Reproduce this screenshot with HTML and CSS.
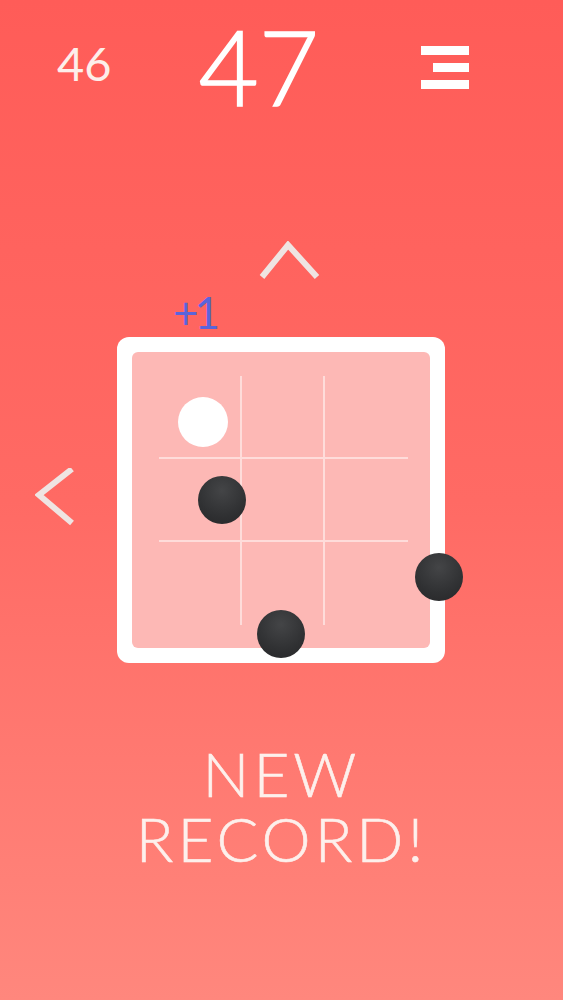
FILE: index.html
```html
<!DOCTYPE html>
<html lang="en">
<head>
    <meta charset="UTF-8">
    <meta name="viewport" content="width=device-width, initial-scale=1.0">
    <title>Grid Dodge</title>
    <link rel="stylesheet" href="styles.css">
</head>
<body>
    <div class="pantalla">
        <header class="marcador">
            <div class="mejor">46</div>
            <div class="puntos">47</div>
            <div class="menu">
                <span></span>
                <span class="corta"></span>
                <span></span>
            </div>
        </header>

        <div class="flecha-arriba">
            <svg width="64" height="40" viewBox="0 0 64 40">
                <polyline points="5,36 31,4 60,36" />
            </svg>
        </div>

        <div class="juego">
            <svg class="flecha-izq" width="40" height="64" viewBox="0 0 40 64">
                <polyline points="37,1 4,27 37,55" />
            </svg>

            <div class="tablero">
                <div class="mas-uno">+1</div>
                <div class="interior">
                    <div class="rejilla">
                        <div></div><div></div><div></div>
                        <div></div><div></div><div></div>
                        <div></div><div></div><div></div>
                    </div>
                </div>
                <div class="bola jugador"></div>
                <div class="bola enemigo" style="left: 81px; top: 139px;"></div>
                <div class="bola enemigo" style="left: 298px; top: 216px;"></div>
                <div class="bola enemigo" style="left: 140px; top: 273px;"></div>
            </div>
        </div>

        <div class="record">
            <div>NEW</div>
            <div>RECORD!</div>
        </div>
    </div>
</body>
</html>
```

FILE: styles.css
```css
body {
    margin: 0;
    font-family: Lato, "Open Sans", sans-serif;
}

.pantalla {
    height: 1000px;
    overflow: hidden;
    background: linear-gradient(to bottom, #ff5c58 0%, #ff6a64 50%, #ff877d 100%);
    color: #fff;
}

.marcador {
    display: flex;
    align-items: flex-start;
    height: 104px;
    padding: 14px 0 0 57px;
}

.mejor {
    font-size: 47px;
    line-height: 1;
    margin-top: 26px;
    margin-right: 87px;
    color: #fdeeea;
}

.puntos {
    font-size: 104px;
    font-weight: 300;
    line-height: 1;
    -webkit-text-stroke: 1.5px #fff;
}

.menu {
    display: flex;
    flex-direction: column;
    align-items: flex-end;
    gap: 8px;
    margin: 32px 94px 0 auto;
}

.menu span {
    display: block;
    width: 48px;
    height: 9px;
    background: #fff;
}

.menu .corta {
    width: 36px;
}

.flecha-arriba svg {
    display: block;
    margin: 123px 0 0 257px;
}

polyline {
    fill: none;
    stroke: #efe4e2;
    stroke-width: 6;
}

.juego {
    display: flex;
    align-items: center;
    margin-top: 56px;
}

.flecha-izq {
    display: block;
    margin-left: 35px;
}

.tablero {
    position: relative;
    width: 298px;
    height: 296px;
    margin-left: 42px;
    padding: 15px;
    background: #fff;
    border-radius: 12px;
}

.interior {
    height: 100%;
    background: #fdb8b5;
    border-radius: 6px;
    padding: 24px 0 0 27px;
    box-sizing: border-box;
}

.rejilla {
    display: grid;
    grid-template-columns: repeat(3, 83px);
    grid-template-rows: repeat(3, 83px);
}

.rejilla div {
    border-right: 2px solid rgba(255, 255, 255, 0.5);
    border-bottom: 2px solid rgba(255, 255, 255, 0.5);
}

.rejilla div:nth-child(3n) {
    border-right: none;
}

.rejilla div:nth-child(n+7) {
    border-bottom: none;
}

.mas-uno {
    position: absolute;
    left: 56px;
    top: -47px;
    font-size: 44px;
    line-height: 1;
    letter-spacing: -4px;
    color: #5a64db;
}

.bola {
    position: absolute;
    border-radius: 50%;
}

.jugador {
    left: 61px;
    top: 60px;
    width: 50px;
    height: 50px;
    background: #fff;
}

.enemigo {
    width: 48px;
    height: 48px;
    background: radial-gradient(circle at 50% 30%, #444547 0%, #303133 60%, #262628 100%);
}

.record {
    margin-top: 78px;
    text-align: center;
    font-size: 62px;
    font-weight: 300;
    line-height: 65px;
    letter-spacing: 4px;
    color: #fdf0ec;
    -webkit-text-stroke: 0.6px #fdf0ec;
}
```
